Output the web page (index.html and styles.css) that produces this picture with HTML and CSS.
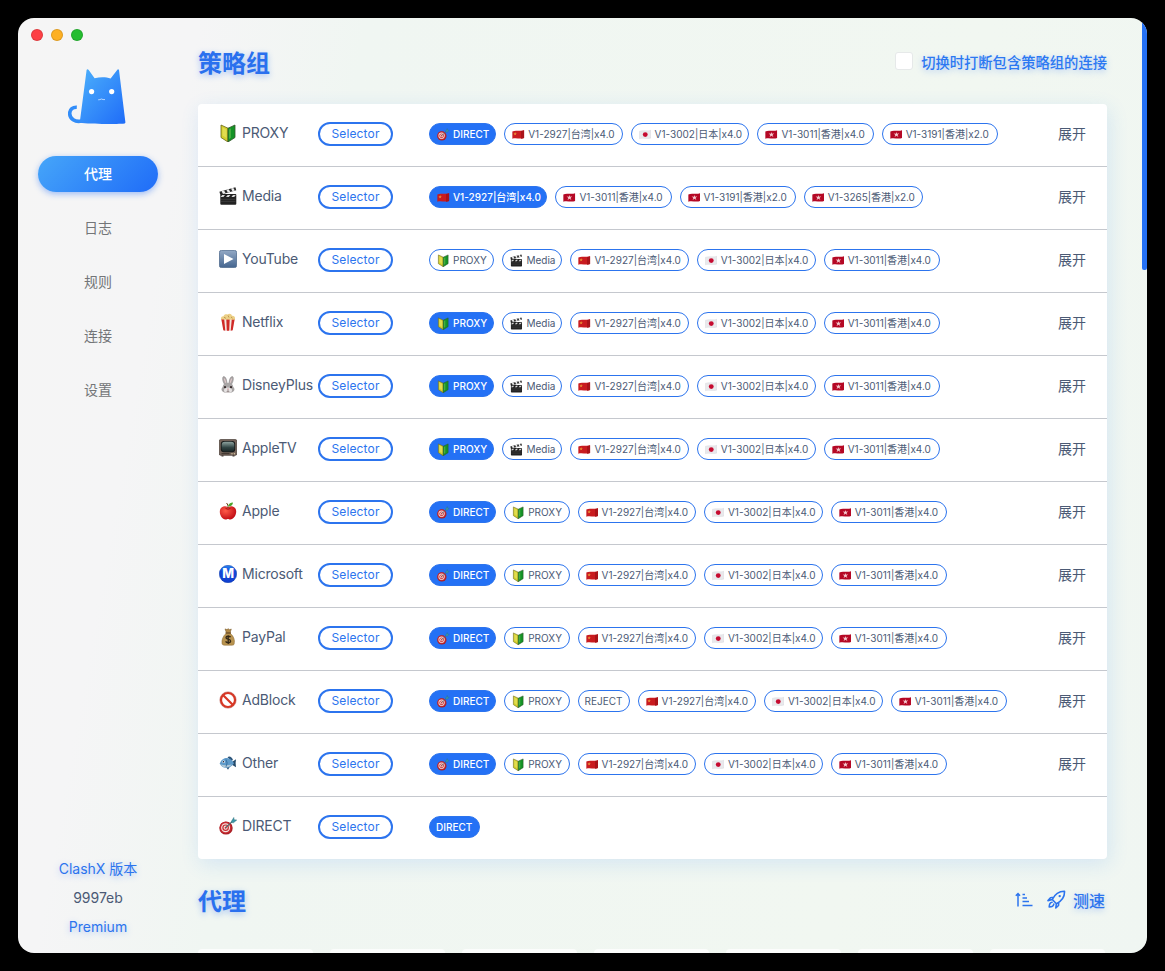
FILE: index.html
```html
<!DOCTYPE html>
<html lang="zh-CN">
<head>
<meta charset="utf-8">
<title>ClashX</title>
<link rel="stylesheet" href="styles.css">
</head>
<body>
<svg class="sprite" aria-hidden="true">
  <defs>
    <linearGradient id="catfill" x1="0" y1="0" x2="1" y2="1"><stop offset="0" stop-color="#4cb0fb"/><stop offset="1" stop-color="#1f6cf8"/></linearGradient>
    <linearGradient id="playfill" x1="0" y1="0" x2="0" y2="1"><stop offset="0" stop-color="#93a9c5"/><stop offset="1" stop-color="#44658f"/></linearGradient>
    <linearGradient id="metrofill" x1="0" y1="0" x2="0" y2="1"><stop offset="0" stop-color="#2a86f0"/><stop offset=".35" stop-color="#1248d8"/><stop offset="1" stop-color="#0f3fd0"/></linearGradient>
    <radialGradient id="applefill" cx=".35" cy=".35" r=".7"><stop offset="0" stop-color="#ff5a48"/><stop offset="1" stop-color="#c00c14"/></radialGradient>
    <linearGradient id="tvfill" x1="0" y1="0" x2="0" y2="1"><stop offset="0" stop-color="#8ea39f"/><stop offset=".6" stop-color="#2f4342"/><stop offset="1" stop-color="#1b2828"/></linearGradient>
  </defs>
  <symbol id="shield" viewBox="0 0 18 18">
    <path d="M2 1L9 4.2V18L2 13.5Z" fill="#d3cf2c" stroke="#67661b" stroke-width=".8"/>
    <path d="M16 1L9 4.2V18L16 13.5Z" fill="#149326" stroke="#33572a" stroke-width=".8"/>
    <path d="M3.5 3.4L7.5 5.4V14L3.5 11.5Z" fill="#e2dc50"/><path d="M10 5.5L12 4.3V13.7L10 15Z" fill="#45ad3f"/>
  </symbol>
  <symbol id="clapper" viewBox="0 0 18 18">
    <path d="M.4 4.8L16.4.3L17.3 3.2L1.3 7.8Z" fill="#292929"/>
    <path d="M2.6 4.2L5 3.5L6.5 6.1L4 6.9ZM7.3 2.8L9.7 2.2L11.2 4.8L8.8 5.5ZM12 1.5L14.3.9L15.8 3.5L13.4 4.2Z" fill="#eee"/>
    <rect x="1.3" y="7" width="16" height="10.7" rx="1" fill="#222"/>
    <path d="M1.5 10L3.2 7.9H6L4.4 10ZM7 10L8.7 7.9H11.4L9.8 10ZM12.4 10L14 7.9H16.8L15.2 10Z" fill="#d6d6d6"/>
    <path d="M2 12.3H16.5M2 14.4H16.5" stroke="#555" stroke-width=".5"/>
  </symbol>
  <symbol id="play" viewBox="0 0 18 18">
    <rect x=".4" y=".4" width="17.2" height="17.2" rx="2" fill="url(#playfill)" stroke="#4c688c" stroke-width=".8"/>
    <path d="M5 4L14.5 9L5 14Z" fill="#fff"/>
  </symbol>
  <symbol id="popcorn" viewBox="0 0 18 18">
    <path d="M2.5 6L4.5 17.5H13.5L15.5 6Z" fill="#f4e6df"/>
    <path d="M2.3 6L4.3 17.3L6.3 17.7L5.2 6ZM7.3 6L7.8 17.8H10.2L10.7 6ZM12.8 6L11.7 17.7L13.7 17.3L15.7 6Z" fill="#cf2a27"/>
    <path d="M2.3 6.5C1.3 4.5 3 3 4.5 3.3C4.8 1 7.5.8 8.6 1.5C10-.2 12.8.9 12.9 2.7C15.5 2.3 16.7 4.5 15.7 6.7Z" fill="#ecd087"/>
    <path d="M5 4.2L7 5.4M9 2.5L10 4.5M12 4L13.5 5.2" stroke="#b58c42" stroke-width=".8"/>
  </symbol>
  <symbol id="rabbit" viewBox="0 0 18 18">
    <path d="M6 9C3 5 3.2 1 4.5.6C6.7.4 8 4 8 8ZM12 9C15 5 14.8 1 13.5.6C11.3.4 10 4 10 8Z" fill="#a9a5a5" stroke="#898486" stroke-width=".5"/>
    <path d="M6.5 7C4.8 4 4.7 2.3 5.1 2.2C6 2.2 7 4.5 7.2 7ZM11.5 7C13.2 4 13.3 2.3 12.9 2.2C12 2.2 11 4.5 10.8 7Z" fill="#ddc6c8"/>
    <path d="M9 6.8C13 6.8 14 9.2 14.3 11C17 13.5 15 17 9 17C3 17 1 13.5 3.7 11C4 9.2 5 6.8 9 6.8Z" fill="#a8a5a5"/>
    <ellipse cx="9" cy="14.2" rx="4" ry="2.7" fill="#e5e2e2"/><circle cx="6" cy="11.2" r="1.1" fill="#352a2b"/><circle cx="12" cy="11.2" r="1.1" fill="#352a2b"/><path d="M8 12.8H10L9 14Z" fill="#bd7376"/><path d="M9 14V15.6M7.6 15.7H10.4" stroke="#655" stroke-width=".6"/>
  </symbol>
  <symbol id="tv" viewBox="0 0 18 18">
    <rect x=".3" y=".6" width="17.4" height="15.7" rx="1.3" fill="#75645a" stroke="#40352f" stroke-width=".7"/>
    <rect x="1.8" y="2" width="14.4" height="11.2" rx="3" fill="#171b1b"/><rect x="2.7" y="2.8" width="12.6" height="9.6" rx="3.2" fill="url(#tvfill)"/>
    <path d="M2.5 14.7H10.5" stroke="#322924" stroke-width=".9"/><circle cx="13" cy="14.7" r=".7" fill="#d8c6a0"/><circle cx="15.4" cy="14.7" r=".7" fill="#d8c6a0"/><path d="M2.5 16.3V17.5H4.5V16.3M13.5 16.3V17.5H15.5V16.3" fill="#40352f"/>
  </symbol>
  <symbol id="apple" viewBox="0 0 18 18">
    <path d="M9 5.2C12 3.3 17.2 4.3 17.2 9.6C17.2 14 14 17.6 11.3 17.5C10 17.4 9.8 17 9 17C8.2 17 7.8 17.4 6.6 17.5C3.5 17.6 .8 13.5 .8 9.8C.8 4.3 6 3.3 9 5.2Z" fill="url(#applefill)"/>
    <path d="M9 6C9.1 4 8.8 2.2 7.5 1" stroke="#6d3b16" stroke-width="1" fill="none"/><path d="M9 4.3C9.3 1.6 11.5.5 14 .4C13.8 3 11.8 4.4 9 4.3Z" fill="#4ca52b"/>
    <path d="M6.5 6.4Q9 8 11.5 6.4" stroke="#94070d" stroke-width=".8" fill="none"/>
  </symbol>
  <symbol id="metro" viewBox="0 0 18 18">
    <circle cx="9" cy="9" r="8.7" fill="url(#metrofill)" stroke="#0a38a8" stroke-width=".5"/>
    <text x="9" y="13.4" text-anchor="middle" font-family="Inter, sans-serif" font-size="12.5" font-weight="800" fill="#fff">M</text>
  </symbol>
  <symbol id="bag" viewBox="0 0 18 18">
    <path d="M6 .9L8 1.6L9.2.7L10.7 1.7L12.3 1L11.2 4.5H7.3Z" fill="#b28a48" stroke="#715020" stroke-width=".5"/>
    <path d="M7 5.5H11.5C14.8 8.5 16 12 15.2 15.8C15 17 14 17.2 13 17.2H5.5C4 17.2 3.2 16.7 3 15.5C2.5 12 4 8 7 5.5Z" fill="#b8934f" stroke="#876329" stroke-width=".5"/>
    <path d="M6.5 5H12" stroke="#73501e" stroke-width="1.4"/>
    <path d="M11.6 9.2C10.7 7.9 7 7.8 7 9.7C7 11.7 11.6 10.5 11.6 13C11.6 15.2 7.5 15.1 6.6 13.4M9.2 7.2V16" fill="none" stroke="#332716" stroke-width="1.3"/>
  </symbol>
  <symbol id="no" viewBox="0 0 18 18">
    <circle cx="9" cy="9" r="7" fill="#fff" stroke="#d83725" stroke-width="2.2"/><path d="M4 4L14 14" stroke="#d83725" stroke-width="2.2"/><circle cx="9" cy="9" r="8.2" fill="none" stroke="#a6261a" stroke-width=".4"/>
  </symbol>
  <symbol id="fish" viewBox="0 0 18 18">
    <path d="M8.5 3.2C10.5 1.6 13 3 14 6L12 7ZM7 13L9 15.7L11 12.5Z" fill="#2d567b"/>
    <path d="M13 8L17 5.2L16.6 9L17 13.2L13 10.8Z" fill="#244969"/>
    <path d="M.8 9.4C2.6 4.8 6 3.7 9 4.2C12 4.8 13.8 7 15 9.2C12.5 13 9.5 14.3 6 13.7C3.3 13.2 1.7 11.8.8 9.4Z" fill="#5e9ac9"/>
    <path d="M1.8 10.4C5 11.5 9 11.4 13 10.4C9 14.6 4 14 1.8 10.4Z" fill="#b1c8d6"/><path d="M7 5.5Q9.3 8.8 7 12.8" fill="none" stroke="#2d6596" stroke-width=".8"/><circle cx="4.6" cy="7.8" r="1.2" fill="#fff"/><circle cx="4.5" cy="7.8" r=".7" fill="#112"/>
  </symbol>
  <symbol id="target" viewBox="0 0 18 18">
    <ellipse cx="7" cy="11" rx="6.7" ry="6.6" fill="#a92026"/><ellipse cx="6.6" cy="10.6" rx="5.9" ry="5.8" fill="#c92931"/><circle cx="6.6" cy="10.7" r="4.5" fill="#f1e5df"/><circle cx="6.6" cy="10.7" r="3.3" fill="#c92931"/><circle cx="6.6" cy="10.7" r="2.1" fill="#f4e8e1"/><circle cx="6.6" cy="10.7" r="1" fill="#c92931"/>
    <path d="M6.8 10.5L14.2 3.6" stroke="#50676b" stroke-width="1.1"/><path d="M12.4 4.2L14.8.4L15.2 2.7L17.8 3L14.5 5.8L12.6 5.5Z" fill="#3b96a6" stroke="#296b79" stroke-width=".4"/>
  </symbol>
  <symbol id="cn" viewBox="0 0 18 18"><path d="M.5 4.5C5 2.2 12 5 17.5 2.9V14C12 16.2 5 13 .5 15.1Z" fill="#c91b1f"/><path d="M13 4L17.5 2.9V14L13 15Z" fill="#a91319"/><path d="M4.5 5.3L5.2 7.1L7 7.2L5.6 8.4L6 10.2L4.5 9.2L3 10.2L3.4 8.4L2 7.2L3.8 7.1Z" fill="#e88c34"/></symbol>
  <symbol id="jp" viewBox="0 0 18 18"><path d="M.5 4.5C5 2.2 12 5 17.5 2.9V14C12 16.2 5 13 .5 15.1Z" fill="#e9e9ec" stroke="#cfd0d5" stroke-width=".5"/><circle cx="9" cy="9.1" r="3.5" fill="#c60b30"/></symbol>
  <symbol id="hk" viewBox="0 0 18 18"><path d="M.5 4.5C5 2.2 12 5 17.5 2.9V14C12 16.2 5 13 .5 15.1Z" fill="#b50825"/><path d="M9.3 5.3L10.1 8L13.2 7.3L10.9 9.6L12.1 12.5L9.3 10.8L6.6 12.6L7.7 9.7L5.3 7.7L8.4 8Z" fill="#f5cbd0"/></symbol>
</svg>

<div class="window">
  <aside class="sidebar">
    <div class="lights"><i class="red"></i><i class="amber"></i><i class="green"></i></div>
    <svg class="logo" viewBox="0 0 60 60">
      <path d="M13.5 53C7 54.5 1.7 50.5 1.7 45.6C1.7 41 5 39 8.8 39.2" fill="none" stroke="#328df9" stroke-width="3.6"/>
      <path d="M18.6 2.1Q19.3.6 20.7 2L26.6 10.3C32 8.7 38 8.7 42.6 10.6L49 2.2Q50.2.5 51 2.1L57.4 54.3Q57.5 55.3 56.6 55.4C48 56.2 22 56.3 11.6 54.8Q12 54 12.2 51Z" fill="url(#catfill)"/>
      <circle cx="23.6" cy="23.6" r="2.6" fill="#fff"/><circle cx="43.7" cy="23.6" r="2.6" fill="#fff"/><path d="M30.2 31.8Q32 31.8 33.4 31Q35 31.8 37 31.6" fill="none" stroke="#d5e9ff" stroke-width=".8"/>
    </svg>
    <nav class="nav"><a class="current">代理</a><a>日志</a><a>规则</a><a>连接</a><a>设置</a></nav>
    <div class="version"><span class="glow">ClashX 版本</span><span>9997eb</span><span class="glow">Premium</span></div>
  </aside>

  <main class="content">
    <header class="head">
      <h1>策略组</h1>
      <label class="toggle"><span class="box"></span><span>切换时打断包含策略组的连接</span></label>
    </header>

    <section class="groups">
      <div class="row"><div class="name"><svg><use href="#shield"/></svg>PROXY</div><div class="type">Selector</div><div class="tags"><span class="tag direct on"><svg><use href="#target"/></svg>DIRECT</span><span class="tag cn"><svg><use href="#cn"/></svg>V1-2927|台湾|x4.0</span><span class="tag jp"><svg><use href="#jp"/></svg>V1-3002|日本|x4.0</span><span class="tag hk"><svg><use href="#hk"/></svg>V1-3011|香港|x4.0</span><span class="tag hk"><svg><use href="#hk"/></svg>V1-3191|香港|x2.0</span></div><a class="more">展开</a></div>
      <div class="row"><div class="name"><svg><use href="#clapper"/></svg>Media</div><div class="type">Selector</div><div class="tags"><span class="tag cn on"><svg><use href="#cn"/></svg>V1-2927|台湾|x4.0</span><span class="tag hk"><svg><use href="#hk"/></svg>V1-3011|香港|x4.0</span><span class="tag hk"><svg><use href="#hk"/></svg>V1-3191|香港|x2.0</span><span class="tag jp"><svg><use href="#hk"/></svg>V1-3265|香港|x2.0</span></div><a class="more">展开</a></div>
      <div class="row"><div class="name"><svg><use href="#play"/></svg>YouTube</div><div class="type">Selector</div><div class="tags"><span class="tag proxy"><svg><use href="#shield"/></svg>PROXY</span><span class="tag media"><svg><use href="#clapper"/></svg>Media</span><span class="tag cn"><svg><use href="#cn"/></svg>V1-2927|台湾|x4.0</span><span class="tag jp"><svg><use href="#jp"/></svg>V1-3002|日本|x4.0</span><span class="tag hk"><svg><use href="#hk"/></svg>V1-3011|香港|x4.0</span></div><a class="more">展开</a></div>
      <div class="row"><div class="name"><svg><use href="#popcorn"/></svg>Netflix</div><div class="type">Selector</div><div class="tags"><span class="tag proxy on"><svg><use href="#shield"/></svg>PROXY</span><span class="tag media"><svg><use href="#clapper"/></svg>Media</span><span class="tag cn"><svg><use href="#cn"/></svg>V1-2927|台湾|x4.0</span><span class="tag jp"><svg><use href="#jp"/></svg>V1-3002|日本|x4.0</span><span class="tag hk"><svg><use href="#hk"/></svg>V1-3011|香港|x4.0</span></div><a class="more">展开</a></div>
      <div class="row"><div class="name"><svg><use href="#rabbit"/></svg>DisneyPlus</div><div class="type">Selector</div><div class="tags"><span class="tag proxy on"><svg><use href="#shield"/></svg>PROXY</span><span class="tag media"><svg><use href="#clapper"/></svg>Media</span><span class="tag cn"><svg><use href="#cn"/></svg>V1-2927|台湾|x4.0</span><span class="tag jp"><svg><use href="#jp"/></svg>V1-3002|日本|x4.0</span><span class="tag hk"><svg><use href="#hk"/></svg>V1-3011|香港|x4.0</span></div><a class="more">展开</a></div>
      <div class="row"><div class="name"><svg><use href="#tv"/></svg>AppleTV</div><div class="type">Selector</div><div class="tags"><span class="tag proxy on"><svg><use href="#shield"/></svg>PROXY</span><span class="tag media"><svg><use href="#clapper"/></svg>Media</span><span class="tag cn"><svg><use href="#cn"/></svg>V1-2927|台湾|x4.0</span><span class="tag jp"><svg><use href="#jp"/></svg>V1-3002|日本|x4.0</span><span class="tag hk"><svg><use href="#hk"/></svg>V1-3011|香港|x4.0</span></div><a class="more">展开</a></div>
      <div class="row"><div class="name"><svg><use href="#apple"/></svg>Apple</div><div class="type">Selector</div><div class="tags"><span class="tag direct on"><svg><use href="#target"/></svg>DIRECT</span><span class="tag proxy"><svg><use href="#shield"/></svg>PROXY</span><span class="tag cn"><svg><use href="#cn"/></svg>V1-2927|台湾|x4.0</span><span class="tag jp"><svg><use href="#jp"/></svg>V1-3002|日本|x4.0</span><span class="tag hk"><svg><use href="#hk"/></svg>V1-3011|香港|x4.0</span></div><a class="more">展开</a></div>
      <div class="row"><div class="name"><svg><use href="#metro"/></svg>Microsoft</div><div class="type">Selector</div><div class="tags"><span class="tag direct on"><svg><use href="#target"/></svg>DIRECT</span><span class="tag proxy"><svg><use href="#shield"/></svg>PROXY</span><span class="tag cn"><svg><use href="#cn"/></svg>V1-2927|台湾|x4.0</span><span class="tag jp"><svg><use href="#jp"/></svg>V1-3002|日本|x4.0</span><span class="tag hk"><svg><use href="#hk"/></svg>V1-3011|香港|x4.0</span></div><a class="more">展开</a></div>
      <div class="row"><div class="name"><svg><use href="#bag"/></svg>PayPal</div><div class="type">Selector</div><div class="tags"><span class="tag direct on"><svg><use href="#target"/></svg>DIRECT</span><span class="tag proxy"><svg><use href="#shield"/></svg>PROXY</span><span class="tag cn"><svg><use href="#cn"/></svg>V1-2927|台湾|x4.0</span><span class="tag jp"><svg><use href="#jp"/></svg>V1-3002|日本|x4.0</span><span class="tag hk"><svg><use href="#hk"/></svg>V1-3011|香港|x4.0</span></div><a class="more">展开</a></div>
      <div class="row"><div class="name"><svg><use href="#no"/></svg>AdBlock</div><div class="type">Selector</div><div class="tags"><span class="tag direct on"><svg><use href="#target"/></svg>DIRECT</span><span class="tag proxy"><svg><use href="#shield"/></svg>PROXY</span><span class="tag reject">REJECT</span><span class="tag cn"><svg><use href="#cn"/></svg>V1-2927|台湾|x4.0</span><span class="tag jp"><svg><use href="#jp"/></svg>V1-3002|日本|x4.0</span><span class="tag hk"><svg><use href="#hk"/></svg>V1-3011|香港|x4.0</span></div><a class="more">展开</a></div>
      <div class="row"><div class="name"><svg><use href="#fish"/></svg>Other</div><div class="type">Selector</div><div class="tags"><span class="tag direct on"><svg><use href="#target"/></svg>DIRECT</span><span class="tag proxy"><svg><use href="#shield"/></svg>PROXY</span><span class="tag cn"><svg><use href="#cn"/></svg>V1-2927|台湾|x4.0</span><span class="tag jp"><svg><use href="#jp"/></svg>V1-3002|日本|x4.0</span><span class="tag hk"><svg><use href="#hk"/></svg>V1-3011|香港|x4.0</span></div><a class="more">展开</a></div>
      <div class="row"><div class="name"><svg><use href="#target"/></svg>DIRECT</div><div class="type">Selector</div><div class="tags"><span class="tag plain on">DIRECT</span></div></div>
    </section>

    <header class="head second">
      <h1>代理</h1>
      <div class="actions">
        <svg class="sort" viewBox="0 0 18 18"><path d="M3 15.5V3M.8 4.8L3 2.5L5 4.8M7.5 3.5H10M7.5 7H12M7.5 10.5H14M7.5 14.5H17.5" fill="none" stroke="#2c74ee" stroke-width="1.5"/></svg>
        <svg class="rocket" viewBox="0 0 19 19"><path d="M5.3 9.5C7.7 4.5 11.5 1.2 17.5 1.3C17.8 7.2 14.7 11.2 9.4 13.7ZM6.5 7.3L3.5 7.7L1 10.6L5.3 9.5M11.7 12.5L11.5 15.5L8.8 18L9.4 13.7M5.1 12.3C3 12.5 2.3 14.5 2.2 17C4.7 17 6.4 16.2 6.8 14.1" fill="none" stroke="#2c74ee" stroke-width="1.6" stroke-linejoin="round" stroke-linecap="round"/><circle cx="12.7" cy="6.1" r="1.2" fill="#2c74ee"/></svg>
        <span>测速</span>
      </div>
    </header>
    <div class="cards"><i></i><i></i><i></i><i></i><i></i><i></i><i></i></div>
  </main>
  <div class="scrollbar"></div>
</div>
</body>
</html>
```
FILE: styles.css
```css
* { box-sizing: border-box; }
body {
  margin: 0;
  height: 971px;
  padding: 18px;
  overflow: hidden;
  background: #000;
  color: #4b5a75;
  font-family: Inter, "Noto Sans CJK SC", sans-serif;
  font-size: 14px;
}
.sprite { position: absolute; width: 0; height: 0; }
.window {
  position: relative;
  display: flex;
  width: 1129px;
  height: 935px;
  overflow: hidden;
  border-radius: 16px;
  background: linear-gradient(100deg, #f5f5f5 0%, #f5f5f6 14%, #f0f6f2 27%, #f1f7f1 75%, #f0f6f2 100%);
}
.sidebar {
  display: flex;
  flex-direction: column;
  align-items: center;
  width: 160px;
  padding-bottom: 12px;
}
.lights { display: flex; gap: 8px; align-self: flex-start; padding: 11px 0 0 13px; }
.lights i { width: 12px; height: 12px; border-radius: 50%; border: 1px solid rgba(0, 0, 0, .12); }
.red { background: #fd4045; }
.amber { background: #fdb023; }
.green { background: #25bd30; }
.logo { width: 60px; height: 60px; margin-top: 27px; }
.nav { display: flex; flex-direction: column; gap: 18px; margin-top: 28px; }
.nav a {
  width: 120px;
  height: 36px;
  border-radius: 18px;
  color: #737578;
  line-height: 36px;
  text-align: center;
}
.nav .current {
  background: linear-gradient(135deg, #46a6f9, #1f6cf8);
  box-shadow: 0 2px 6px rgba(44, 116, 246, .45);
  color: #fff;
  font-weight: 500;
}
.version { display: flex; flex-direction: column; align-items: center; margin-top: auto; line-height: 29px; }
.version .glow { color: #2c74ee; text-shadow: 0 2px 6px rgba(44, 116, 246, .35); }
.content { display: flex; flex-direction: column; width: 909px; margin-left: 20px; }
.head { display: flex; flex: none; align-items: center; justify-content: space-between; height: 86px; }
h1 { margin: 0; color: #2a70ee; font-size: 24px; font-weight: 700; text-shadow: 0 2px 6px rgba(44, 116, 246, .4); }
.toggle { display: flex; align-items: center; gap: 8px; color: #2c78f2; font-size: 14.3px; font-weight: 500; text-shadow: 0 2px 6px rgba(44, 116, 246, .35); }
.box { width: 18px; height: 18px; border: 1px solid #e6e9e9; border-radius: 3px; background: #fff; }
.groups {
  height: 755px;
  flex: none;
  border-radius: 4px;
  background: #fff;
  box-shadow: 2px 5px 20px rgba(44, 138, 248, .14);
}
.row { display: flex; align-items: center; height: 63px; padding: 0 21px; border-bottom: 1px solid #c5c8ce; }
.row:last-child { height: 62px; border-bottom: 0; }
.name { display: flex; align-items: center; gap: 5px; width: 99px; margin-top: -5px; letter-spacing: -.2px; white-space: nowrap; }
.name svg { flex: none; width: 18px; height: 18px; }
.type {
  width: 75px;
  height: 24px;
  margin-top: -2px;
  border: 2px solid #2c74ee;
  border-radius: 12px;
  color: #2c74ee;
  font-size: 12px;
  line-height: 20px;
  letter-spacing: .15px;
  text-align: center;
}
.tags { display: flex; gap: 8px; margin: -2px 0 0 36px; }
.tag {
  display: flex;
  align-items: center;
  gap: 3.5px;
  height: 22px;
  padding: 0 0 0 7px;
  border: 1px solid #2c74ee;
  border-radius: 11px;
  font-size: 10px;
  line-height: 20px;
  white-space: nowrap;
}
.tag svg { flex: none; width: 12.5px; height: 13px; }
.on { background: #2471f5; color: #fff; font-weight: 500; }
.direct { width: 67.2px; }
.proxy { width: 65.4px; }
.media { width: 60px; }
.cn { width: 118.4px; }
.jp { width: 118.9px; }
.hk { width: 116.2px; }
.reject { width: 52px; padding-left: 6px; }
.plain { width: 51px; padding-left: 6px; }
.more { margin: -5px 0 0 auto; }
.second { height: 90px; }
.second h1 { margin-top: -9px; }
.actions { display: flex; align-items: center; margin: -9px 2px 0 0; color: #2c74ee; font-size: 16px; font-weight: 500; text-shadow: 0 2px 6px rgba(44, 116, 246, .35); }
.sort { width: 18px; height: 18px; margin-right: 14px; }
.rocket { width: 19px; height: 19px; margin-right: 7px; }
.cards { display: flex; gap: 17px; flex: none; }
.cards i { width: 115px; height: 60px; border-radius: 4px; background: #fff; opacity: .75; }
.scrollbar { position: absolute; top: 0; right: 0; width: 5px; height: 252px; border-radius: 2px; background: #2471f5; }
```
